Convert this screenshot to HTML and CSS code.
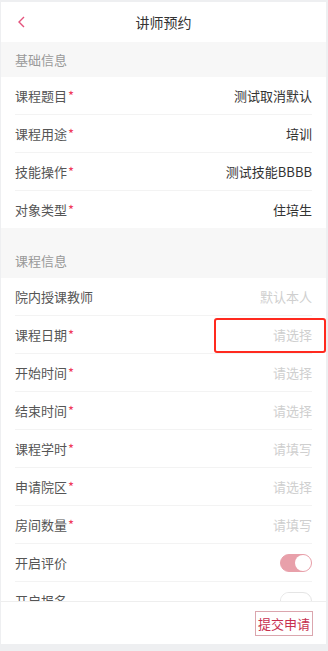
FILE: index.html
```html
<!DOCTYPE html>
<html lang="zh-CN">
<head>
<meta charset="utf-8">
<title>讲师预约</title>
<link rel="stylesheet" href="styles.css">
</head>
<body>
<div class="app">
  <header class="nav">
    <span class="back">
      <svg width="10" height="14" viewBox="0 0 10 14"><polyline points="7,2 2,7 7,12" fill="none" stroke="#e4527c" stroke-width="1.4"/></svg>
    </span>
    <span class="nav-title">讲师预约</span>
  </header>
  <main class="content">
    <div class="sec-title">基础信息</div>
    <div class="group">
      <div class="row"><span class="label">课程题目<i class="req">*</i></span><span class="value">测试取消默认</span></div>
      <div class="row"><span class="label">课程用途<i class="req">*</i></span><span class="value">培训</span></div>
      <div class="row"><span class="label">技能操作<i class="req">*</i></span><span class="value">测试技能BBBB</span></div>
      <div class="row"><span class="label">对象类型<i class="req">*</i></span><span class="value">住培生</span></div>
    </div>
    <div class="spacer"></div>
    <div class="sec-title">课程信息</div>
    <div class="group">
      <div class="row"><span class="label">院内授课教师</span><span class="value ph">默认本人</span></div>
      <div class="row"><span class="label">课程日期<i class="req">*</i></span><span class="value ph">请选择</span></div>
      <div class="row"><span class="label">开始时间<i class="req">*</i></span><span class="value ph">请选择</span></div>
      <div class="row"><span class="label">结束时间<i class="req">*</i></span><span class="value ph">请选择</span></div>
      <div class="row"><span class="label">课程学时<i class="req">*</i></span><span class="value ph">请填写</span></div>
      <div class="row"><span class="label">申请院区<i class="req">*</i></span><span class="value ph">请选择</span></div>
      <div class="row"><span class="label">房间数量<i class="req">*</i></span><span class="value ph">请填写</span></div>
      <div class="row"><span class="label">开启评价</span><span class="switch on"><span class="knob"></span></span></div>
      <div class="row"><span class="label">开启报名</span><span class="switch"><span class="knob"></span></span></div>
    </div>
  </main>
  <footer class="footer">
    <button class="submit">提交申请</button>
  </footer>
  <div class="highlight"></div>
</div>
</body>
</html>
```
FILE: styles.css
```css
* { box-sizing: border-box; margin: 0; padding: 0; }
html, body { width: 328px; height: 651px; overflow: hidden; }
body {
  background: #eeeff1;
  font-family: "Noto Sans CJK SC", "Noto Sans", sans-serif;
  font-size: 13px;
  color: #333;
}
.app {
  position: relative;
  width: 325px;
  height: 642px;
  margin: 2px 0 0 1px;
  background: #fff;
  display: flex;
  flex-direction: column;
}
.nav {
  height: 40px;
  flex: none;
  display: flex;
  align-items: center;
  justify-content: center;
  position: relative;
}
.back {
  position: absolute;
  left: 16px;
  top: 13px;
  display: flex;
}
.nav-title { font-size: 14px; color: #333; }
.content {
  flex: 1;
  overflow: hidden;
  background: #f7f7f7;
}
.sec-title {
  height: 35px;
  line-height: 35px;
  padding-left: 14px;
  color: #999;
  background: #f7f7f7;
}
.spacer { height: 15px; }
.group { background: #fff; padding: 0 14px; }
.row {
  height: 38px;
  display: flex;
  align-items: center;
  justify-content: space-between;
  border-bottom: 1px solid #f3f3f3;
}
.group .row:last-child { border-bottom: none; height: 37px; }
.label { color: #555; }
.req { font-style: normal; color: #f0395a; margin-left: 1px; }
.value { color: #333; }
.value.ph { color: #cfcfcf; }
.switch {
  width: 32px;
  height: 18px;
  border-radius: 9px;
  background: #fff;
  border: 1px solid #e5e5e5;
  position: relative;
  flex: none;
}
.switch .knob {
  position: absolute;
  top: 0;
  left: 0;
  width: 16px;
  height: 16px;
  border-radius: 50%;
  background: #fff;
}
.switch.on { background: #e8a0aa; border-color: #e8a0aa; }
.switch.on .knob { left: 14px; }
.footer {
  height: 43px;
  flex: none;
  border-top: 1px solid #eee;
  display: flex;
  align-items: center;
  justify-content: flex-end;
  padding-right: 13px;
  background: #fff;
}
.submit {
  height: 25px;
  padding: 0 2px;
  background: #fff;
  border: 1px solid #dba6ae;
  color: #c7304f;
  font-family: inherit;
  font-size: 13px;
  line-height: 23px;
}
.highlight {
  position: absolute;
  left: 213px;
  top: 316px;
  width: 112px;
  height: 35px;
  border: 2px solid #ff2a1f;
  border-radius: 3px;
}
```
